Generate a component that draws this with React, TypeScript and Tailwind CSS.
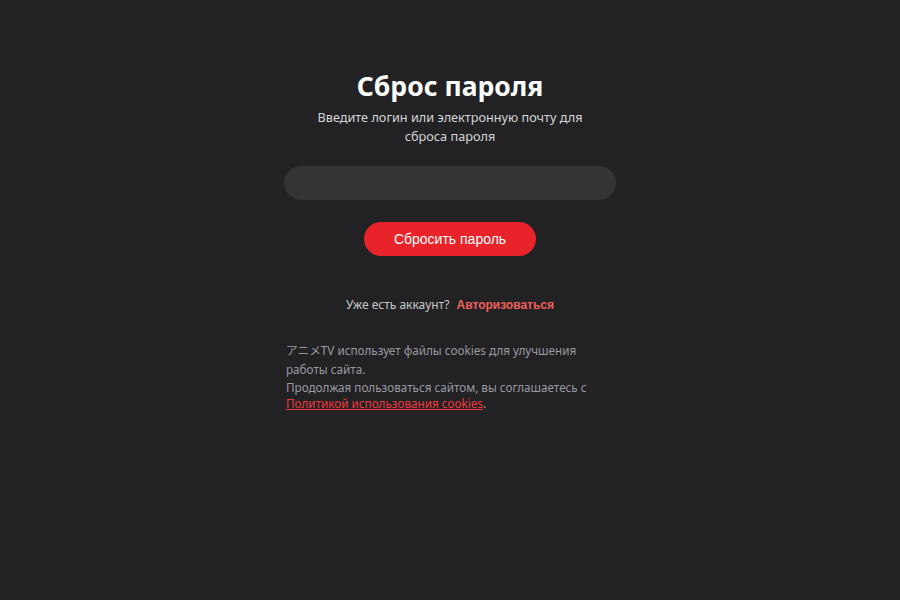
export default function App() {
  return (
    <div className="min-h-screen w-full bg-[#222224] font-['Noto_Sans','Open_Sans','Noto_Sans_CJK_JP',sans-serif]">
      <div className="mx-auto flex w-[332px] flex-col items-center pt-[68px]">
        <h1 className="text-[26.5px] font-bold leading-[36px] text-white">Сброс пароля</h1>
        <p className="mt-[4px] w-[280px] text-center text-[12.7px] leading-[19px] text-[#d6d6d8]">
          Введите логин или электронную почту для сброса пароля
        </p>

        <input
          type="text"
          className="mt-[20px] h-[34px] w-full rounded-full bg-[#343436] px-4 text-sm text-white outline-none"
        />

        <button className="mt-[22px] h-[34px] w-[172px] rounded-full bg-[#e8242a] font-['Liberation_Sans',Arial,sans-serif] text-[14px] text-white">
          Сбросить пароль
        </button>

        <p className="mt-[40px] text-[12px] leading-[18px] text-[#c8c8ca]">
          Уже есть аккаунт?{' '}
          <a className="ml-1 font-['Liberation_Sans',Arial,sans-serif] font-bold text-[#f0605a]">Авторизоваться</a>
        </p>

        <div className="mt-[27px] w-full px-[2px] text-[11.7px] text-[#9a9aa0]">
          <p className="leading-[19px]">アニメTV использует файлы cookies для улучшения работы сайта.</p>
          <p className="leading-[16px]">
            Продолжая пользоваться сайтом, вы соглашаетесь с{' '}
            <a className="text-[#f0383c] underline">Политикой использования cookies</a>.
          </p>
        </div>
      </div>
    </div>
  )
}
